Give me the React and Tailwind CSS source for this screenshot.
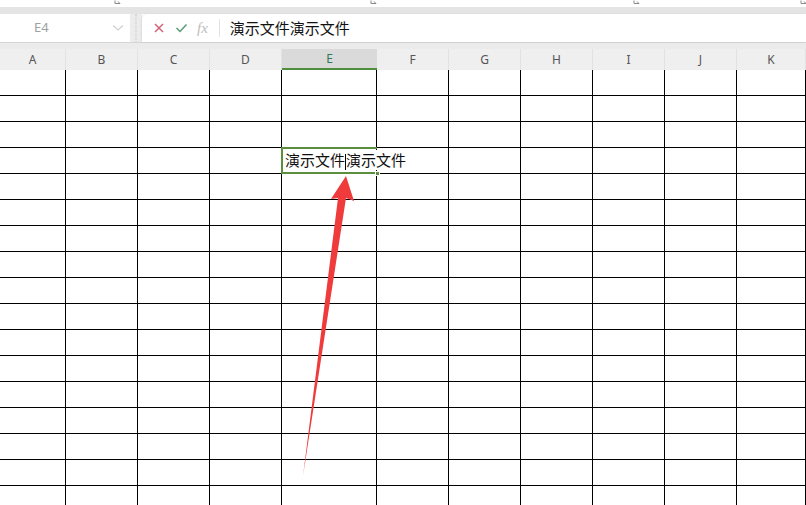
import React from 'react';

const cols = [
  { k: 'A', w: 66 },
  { k: 'B', w: 72 },
  { k: 'C', w: 72 },
  { k: 'D', w: 72 },
  { k: 'E', w: 95 },
  { k: 'F', w: 72 },
  { k: 'G', w: 72 },
  { k: 'H', w: 72 },
  { k: 'I', w: 72 },
  { k: 'J', w: 72 },
  { k: 'K', w: 69 },
];

const rows = Array.from({ length: 17 }, (_, i) => i + 1);

function Launcher({ x }) {
  return (
    <svg className="absolute top-0" style={{ left: x }} width="8" height="6" viewBox="0 0 8 6">
      <path d="M1 0.5 V3.5 H6 M4 1.5 L6 3.5" stroke="#8a8a8a" strokeWidth="1" fill="none" />
    </svg>
  );
}

export default function App() {
  const font = { fontFamily: '"Noto Sans", "Noto Sans CJK SC", sans-serif' };
  const cjk = { fontFamily: '"Noto Sans CJK SC", sans-serif' };
  return (
    <div className="w-[806px] h-[505px] overflow-hidden bg-white relative" style={font}>
      {/* ribbon bottom edge */}
      <div className="h-[7px] relative bg-white">
        <Launcher x={114} />
        <Launcher x={370} />
        <Launcher x={633} />
        <Launcher x={800} />
      </div>
      <div className="h-[7px] bg-[#e4e4e4]" />

      {/* formula bar */}
      <div className="h-[28px] flex bg-white">
        <div className="w-[130px] flex items-center pl-[34px] pr-[6px]">
          <span className="text-[13px] text-[#a0a0a0] flex-1">E4</span>
          <svg width="12" height="8" viewBox="0 0 12 8">
            <path d="M1 1.5 L6 6 L11 1.5" stroke="#d0d0d0" strokeWidth="1.2" fill="none" />
          </svg>
        </div>
        <div className="w-[12px] bg-[#ececec] flex justify-center">
          <div className="w-[2px] h-full border-x border-dotted border-[#d8d8d8]" />
        </div>
        <div className="flex-1 flex items-center rounded-tl-[6px] bg-white shadow-[-1px_0_2px_rgba(0,0,0,0.08)]">
          <svg className="ml-[11px]" width="12" height="12" viewBox="0 0 12 12">
            <path d="M2 2 L10 10 M10 2 L2 10" stroke="#d4607a" strokeWidth="1.5" fill="none" />
          </svg>
          <svg className="ml-[10px]" width="13" height="12" viewBox="0 0 13 12">
            <path d="M1.5 6 L5 9.5 L11.5 2.5" stroke="#5a9a78" strokeWidth="1.5" fill="none" />
          </svg>
          <span className="ml-[9px] text-[15px] italic text-[#bdbdbd] leading-none" style={{ fontFamily: '"Liberation Serif", serif' }}>
            fx
          </span>
          <div className="ml-[11px] w-px h-[18px] bg-[#e2e2e2]" />
          <span className="ml-[10px] text-[15px] text-[#111]" style={cjk}>
            演示文件演示文件
          </span>
        </div>
      </div>

      <div className="h-[7px] bg-[#ebebeb] border-t border-[#d6d6d6]" />

      {/* column headers */}
      <div className="h-[21px] flex bg-[#efefef]">
        {cols.map((c) => (
          <div
            key={c.k}
            style={{ width: c.w }}
            className={
              c.k === 'E'
                ? 'shrink-0 flex items-center justify-center text-[12px] text-[#2f7a5a] bg-[#dadada] border-b-2 border-[#4f8f3c]'
                : 'shrink-0 flex items-center justify-center text-[12px] text-[#555] border-r border-[#e2e2e2]'
            }
          >
            {c.k}
          </div>
        ))}
      </div>

      {/* grid */}
      <div className="relative">
        {rows.map((r) => (
          <div key={r} className="h-[26px] flex">
            {cols.map((c) => (
              <div
                key={c.k}
                style={{ width: c.w }}
                className="shrink-0 border-r border-b border-black relative"
              >
                {r === 4 && c.k === 'E' && (
                  <div className="absolute -left-px -top-px w-[96px] h-[27px] border-2 border-r-0 border-[#5b8f3e] z-10">
                    <span className="absolute left-[2px] top-[1px] whitespace-nowrap text-[15px] text-[#111] leading-[20px] bg-white" style={cjk}>
                      演示文件<span className="inline-block w-px h-[16px] bg-black align-middle" />演示文件
                    </span>
                    <div className="absolute -right-[3px] -bottom-[4px] w-[5px] h-[5px] bg-[#5b8f3e] border border-white" />
                  </div>
                )}
              </div>
            ))}
          </div>
        ))}

        <svg className="absolute left-0 top-0 z-20" width="806" height="435" viewBox="0 70 806 435">
          <polygon points="346,176 354,201 346,198 303,476 338,198 331,199" fill="#ef3b3b" />
        </svg>
      </div>
    </div>
  );
}
